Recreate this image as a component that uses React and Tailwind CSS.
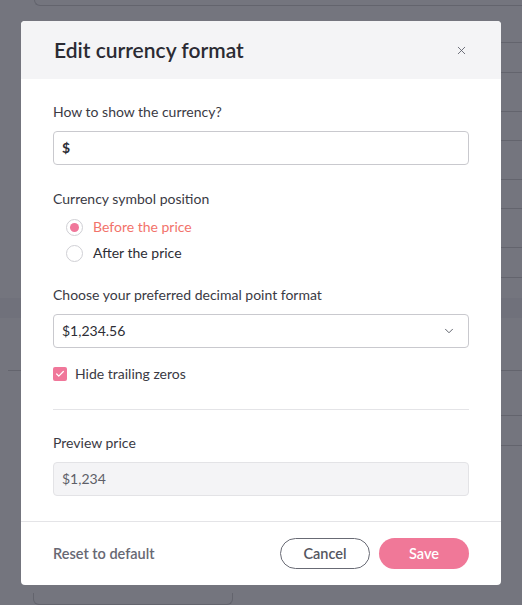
import { X, ChevronDown, Check } from "lucide-react";

// rows of the page behind the overlay: height and which side their rule shows on
const pageRows = [
  { h: 37, cls: "ml-[400px] border-b" },
  { h: 30, cls: "ml-[400px] border-b" },
  { h: 39, cls: "ml-[400px] border-b" },
  { h: 29, cls: "ml-[400px] border-b" },
  { h: 39, cls: "ml-[400px] border-b" },
  { h: 29, cls: "ml-[400px] border-b" },
  { h: 39, cls: "ml-[400px] border-b" },
  { h: 30, cls: "ml-[400px] border-b" },
  { h: 20, cls: "" },
  { h: 20, cls: "bg-[#70717b]" },
  { h: 53, cls: "ml-[8px] border-b" },
  { h: 45, cls: "ml-[400px] border-b" },
  { h: 30, cls: "ml-[400px] border-b" },
];

function Backdrop() {
  return (
    <div className="flex h-full flex-col">
      <div className="ml-[34px] h-[6px] shrink-0 rounded-bl-md border-b border-l border-[#63646d]" />
      {pageRows.map((r, i) => (
        <div key={i} className={`shrink-0 border-[#63646d] ${r.cls}`} style={{ height: r.h }} />
      ))}
      <div className="mt-auto ml-[33px] h-[12px] w-[200px] shrink-0 rounded-b-md border border-t-0 border-[#63646d]" />
    </div>
  );
}

function Radio({ checked, label }) {
  return (
    <label className="flex h-[20px] items-center gap-[10px]">
      <span className="flex h-[17px] w-[17px] items-center justify-center rounded-full border border-[#cfcfd4] bg-white">
        {checked && <span className="h-[9px] w-[9px] rounded-full bg-[#f0779a]" />}
      </span>
      <span className={checked ? "text-[#f2736b]" : "text-[#2d2d35]"}>{label}</span>
    </label>
  );
}

export default function App() {
  return (
    <div
      className="relative h-[605px] w-[522px] overflow-hidden bg-[#74757e] text-[14px] leading-[20px] text-[#2d2d35]"
      style={{ fontFamily: "Lato, 'Open Sans', sans-serif" }}
    >
      <Backdrop />

      {/* modal */}
      <div className="absolute left-[21px] top-[21px] flex w-[480px] flex-col overflow-hidden rounded-[4px] bg-white">
        <div className="flex h-[58px] items-center justify-between bg-[#f4f4f6] pl-[33px] pr-[33px]">
          <h2 className="text-[21px] font-semibold text-[#2b2b33]">Edit currency format</h2>
          <X className="h-[13px] w-[13px] text-[#5b5e69]" strokeWidth={1.6} />
        </div>

        <div className="flex flex-col px-[32px] pt-[23px]">
          <p className="text-[#3a3a44]">How to show the currency?</p>
          <div className="mt-[9px] flex h-[34px] items-center rounded-[4px] border border-[#c9c9ce] px-[8px] font-bold">
            $
          </div>

          <p className="mt-[24px] text-[#3a3a44]">Currency symbol position</p>
          <div className="mt-[8px] flex flex-col gap-[6px] pl-[13px]">
            <Radio checked label="Before the price" />
            <Radio label="After the price" />
          </div>

          <p className="mt-[22px] text-[#3a3a44]">Choose your preferred decimal point format</p>
          <div className="mt-[9px] flex h-[34px] items-center justify-between rounded-[4px] border border-[#c9c9ce] pl-[8px] pr-[12px]">
            <span>$1,234.56</span>
            <ChevronDown className="h-[14px] w-[14px] text-[#555863]" strokeWidth={1.6} />
          </div>

          <label className="mt-[16px] flex h-[20px] items-center gap-[8px]">
            <span className="flex h-[14px] w-[14px] items-center justify-center rounded-[2px] bg-[#f0779a]">
              <Check className="h-[10px] w-[10px] text-white" strokeWidth={3} />
            </span>
            <span className="text-[#3a3a44]">Hide trailing zeros</span>
          </label>

          <div className="mt-[25px] border-t border-[#e4e4e7]" />

          <p className="mt-[23px] text-[#3a3a44]">Preview price</p>
          <div className="mt-[9px] flex h-[34px] items-center rounded-[4px] border border-[#e3e3e6] bg-[#f4f4f6] px-[8px] text-[#5e5f68]">
            $1,234
          </div>
        </div>

        <div className="mt-[25px] flex h-[64px] items-center justify-between border-t border-[#e4e4e7] px-[32px]">
          <button className="text-[14.5px] font-semibold text-[#676873]">Reset to default</button>
          <div className="flex gap-[9px]">
            <button className="h-[31px] w-[90px] rounded-full border border-[#686a74] text-[14.5px] font-semibold text-[#55565f]">
              Cancel
            </button>
            <button className="h-[31px] w-[90px] rounded-full bg-[#f07898] text-[14.5px] font-semibold text-white">
              Save
            </button>
          </div>
        </div>
      </div>
    </div>
  );
}
